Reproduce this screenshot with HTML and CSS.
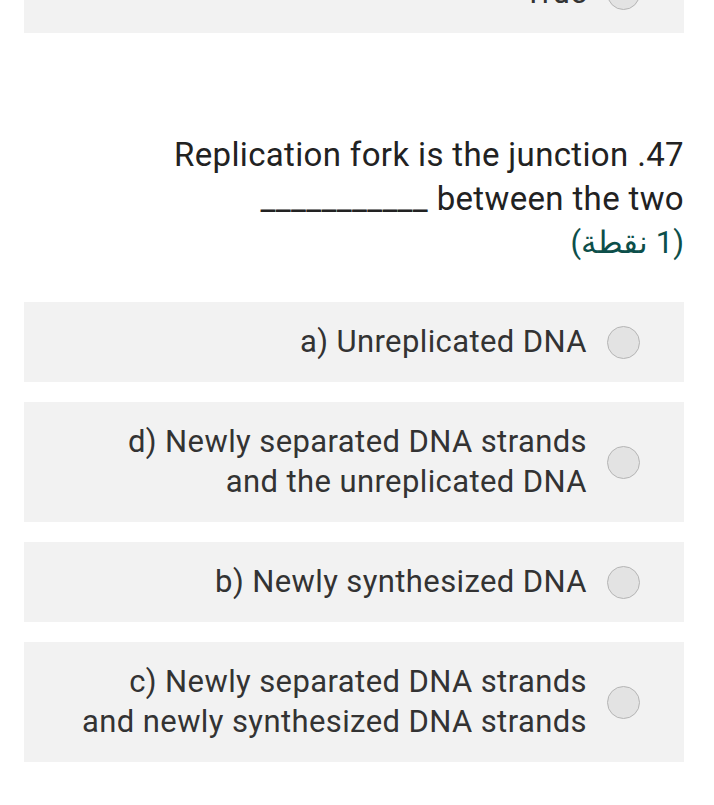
FILE: index.html
```html
<!DOCTYPE html>
<html lang="ar" dir="rtl">
<head>
<meta charset="utf-8">
<link rel="stylesheet" href="styles.css">
</head>
<body>
<div class="page">
  <div class="option option-top">
    <span class="radio"></span>
    <span class="label" dir="ltr">True</span>
  </div>

  <div class="question">
    <div class="q-text">47. Replication fork is the junction<br>between the two ___________</div>
    <div class="points">(1 نقطة)</div>
  </div>

  <div class="options">
    <div class="option">
      <span class="radio"></span>
      <span class="label" dir="ltr">a) Unreplicated DNA</span>
    </div>
    <div class="option">
      <span class="radio"></span>
      <span class="label" dir="ltr">d) Newly separated DNA strands<br>and the unreplicated DNA</span>
    </div>
    <div class="option">
      <span class="radio"></span>
      <span class="label" dir="ltr">b) Newly synthesized DNA</span>
    </div>
    <div class="option">
      <span class="radio"></span>
      <span class="label" dir="ltr">c) Newly separated DNA strands<br>and newly synthesized DNA strands</span>
    </div>
  </div>
</div>
</body>
</html>
```

FILE: styles.css
```css
html, body {
  margin: 0;
  padding: 0;
  background: #ffffff;
  overflow: hidden;
}
body {
  font-family: Roboto, "Noto Sans", "Liberation Sans", sans-serif;
  color: #222;
}
.page {
  width: 660px;
  margin-right: 30px;
  margin-left: 24px;
}
.option {
  display: flex;
  align-items: center;
  gap: 20px;
  background: #f2f2f2;
  padding: 20px 44px 20px 20px;
  min-height: 40px;
}
.option-top {
  margin-top: -47px;
}
.label {
  font-size: 31px;
  line-height: 40px;
  letter-spacing: 0.4px;
  color: #333;
  text-align: right;
}
.radio {
  flex: none;
  width: 31px;
  height: 31px;
  border-radius: 50%;
  border: 1px solid #b5b5b5;
  background: #e3e3e3;
}
.question {
  padding-top: 100px;
  padding-bottom: 37px;
  text-align: right;
}
.q-text {
  font-size: 33px;
  line-height: 44px;
  letter-spacing: 0.35px;
  color: #222;
}
.points {
  font-size: 31px;
  line-height: 44px;
  color: #0d4f4a;
}
.options {
  display: flex;
  flex-direction: column;
  gap: 20px;
}
```
